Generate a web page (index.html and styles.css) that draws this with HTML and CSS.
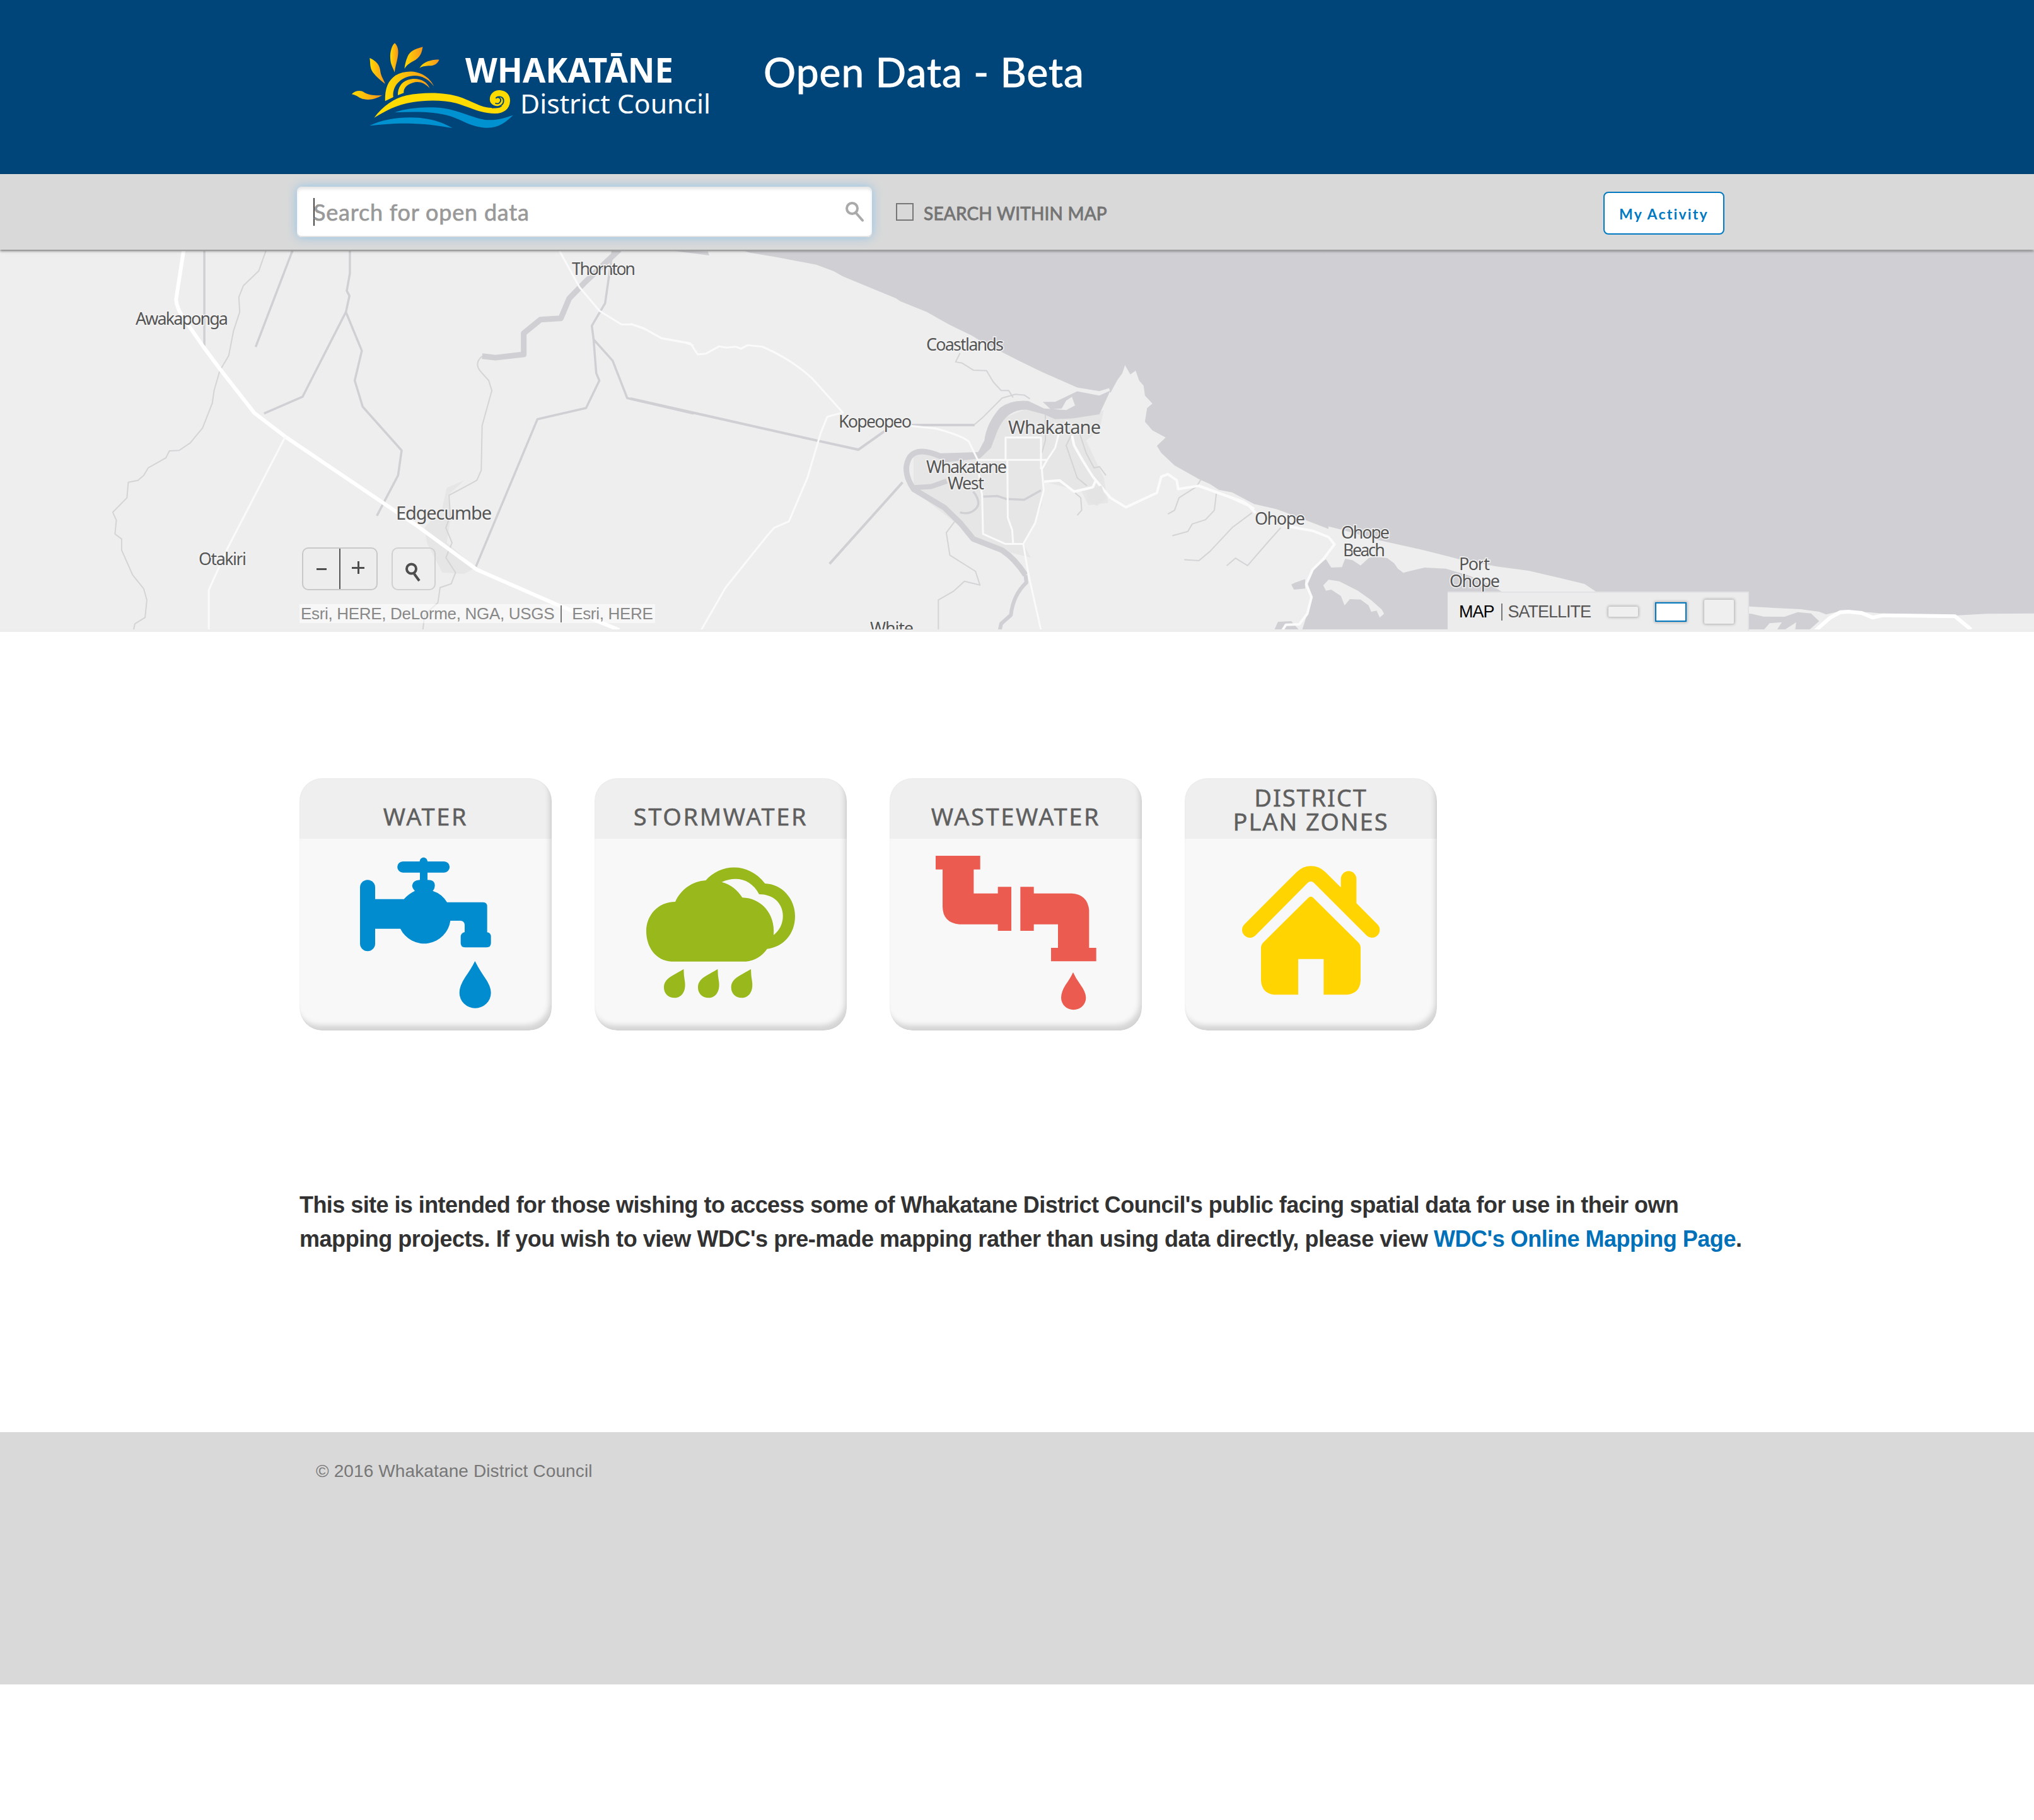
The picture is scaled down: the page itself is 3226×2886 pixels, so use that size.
FILE: index.html
```html
<!DOCTYPE html>
<html lang="en">
<head>
<meta charset="utf-8">
<title>Whakatane District Council Open Data</title>
<link rel="stylesheet" href="styles.css">
</head>
<body>
<header class="header">
  <svg class="logo" viewBox="540 50 620 170" role="img" aria-label="Whakatane District Council">
    <defs>
      <linearGradient id="sun" x1="0" y1="0" x2="1" y2="0">
        <stop offset="0" stop-color="#ffdb00"/>
        <stop offset="1" stop-color="#f7941d"/>
      </linearGradient>
    </defs>
    <g transform="translate(540 50) scale(.39541 .33333)">
      <g fill="url(#sun)">
        <path d="M45 298C60 278 85 277 98 292C120 305 145 304 167 304C140 322 118 327 95 322C75 319 66 302 45 298Z"/>
        <path d="M117 126C145 140 158 160 160 190C163 215 174 230 179 249C160 232 145 216 130 194C116 170 121 150 117 126Z"/>
        <path d="M218 55C230 70 235 90 229 125C225 150 219 170 217 194C212 172 201 160 200 128C198 98 206 65 218 55Z"/>
        <path d="M330 73C326 100 322 118 301 135C282 147 265 158 257 177C258 158 264 130 273 110C287 86 308 82 330 73Z"/>
        <path d="M396 134C388 156 375 163 353 163C338 164 326 167 317 173C325 158 335 149 350 142C367 135 382 132 396 134Z"/>
        <path d="M179 331C178 270 190 235 220 209C270 175 345 185 375 261C350 220 315 204 280 212C235 222 207 265 212 312Z"/>
        <path d="M230 303C230 265 245 240 270 230C305 217 345 230 358 270C335 240 310 235 290 244C265 253 252 272 254 292Z"/>
      </g>
      <path fill="#ffdb00" d="M135 410C170 355 215 317 265 304C340 286 425 290 480 312C530 333 565 363 607 363C625 366 640 365 649 353C625 360 600 350 599 324C598 295 618 277 640 279C670 282 682 308 680 333C678 368 655 390 620 390C560 390 525 362 465 341C410 324 340 326 290 336C225 348 180 378 135 410Z"/>
      <path d="M623 318C630 304 656 308 654 332C653 350 640 358 607 363M623 318C632 307 648 318 641 334C638 343 628 346 621 340" fill="none" stroke="#004579" stroke-width="5"/>
      <path fill="#0092d0" d="M217 385C270 362 350 355 415 365C480 377 530 410 580 420C625 425 660 410 692 398C665 430 635 458 590 458C530 458 490 422 445 404C380 380 300 380 217 385Z"/>
      <path fill="#0092d0" d="M117 448C180 410 280 400 350 416C395 426 425 442 449 459C400 451 360 440 290 438C220 435 170 442 117 448Z"/>
    </g>
    <text class="logo-name" x="738" y="131" textLength="330" lengthAdjust="spacingAndGlyphs">WHAKATĀNE</text>
    <text class="logo-sub" x="825" y="180" textLength="302" lengthAdjust="spacingAndGlyphs">District Council</text>
  </svg>
  <h1 class="title">Open Data - Beta</h1>
</header>

<section class="searchbar">
  <div class="search-field">
    <span class="caret"></span>
    <span class="placeholder">Search for open data</span>
    <svg class="search-icon" viewBox="0 0 30 32"><circle cx="10.500" cy="10.500" r="8.500"/><path d="M16.500 17.500L27 29.500"/></svg>
  </div>
  <span class="checkbox"></span>
  <span class="within">SEARCH WITHIN MAP</span>
  <button class="activity">My Activity</button>
</section>

<section class="map">
  <svg class="map-canvas" viewBox="0 398 3226 600">
    <!-- urban areas -->
    <g class="urban">
      <g transform="translate(0 390) scale(.70153 .39541)">
        <path d="M1050 940L1010 970L1000 1050L960 1130L965 1190L1000 1310L1050 1315L1075 1290L1010 1190L1020 1080L1012 1000Z"/>
      </g>
      <g transform="translate(1000 390) scale(.70153 .39541)">
        <path d="M640 830L790 840L830 700L900 650L980 690L1070 660L1060 740L1030 780L1070 930L1080 1030L1035 1040L1020 985L935 945L930 1040L890 1200L905 1250L860 1230L770 1160L640 980Z"/>
      </g>
    </g>
    <!-- sea, estuary and harbour -->
    <g class="sea">
      <g transform="translate(1000 390) scale(.70153 .39541)">
        <path d="M240 10L270 27L330 45L420 75L460 102L480 122L600 210L610 222L670 265L720 315L770 358L800 390L850 435L880 462L930 505L1010 568L1060 582L1082 570L1085 590L1100 540L1112 510L1118 478L1130 515L1142 500L1150 540L1160 560L1163 600L1180 632L1168 650L1163 705L1180 740L1210 768L1190 802L1200 830L1230 880L1285 935L1310 955L1330 978L1360 988L1410 1035L1460 1055L1520 1095L1578 1135L1578 0L240 0Z"/>
        <path d="M90 18L175 22L178 38L130 27Z"/>
        <path d="M1085 580L1060 600L1010 583L960 625L932 625L950 655L975 652L985 620L998 605L1005 640L985 658L935 652L900 622Q860 615 835 650Q805 710 800 780L785 830L700 845L710 868L790 852L815 810L830 740Q850 655 895 656L935 675L960 695L1000 692L1060 675Z"/>
      </g>
      <g transform="translate(1900 640) scale(.84566 .33333)">
        <path d="M236 -760L236 579L270 600L340 650L420 695L490 740L560 775L620 795L680 830L725 858L745 892L760 960L1035 965L1080 972L1130 978L1165 990L1178 1003L1205 987L1260 993L1300 1003L1420 1008L1480 1000L1568 998L1568 -760Z"/>
        <path d="M240 740L250 780L270 778L276 738L290 745L305 770L320 735L330 728L355 735L368 760L375 785L385 805L400 795L425 780L465 785L510 820L550 865L570 895L600 930L900 985L1038 1000L1060 1013L1100 1014L1125 992L1150 998L1165 1035L1145 1080L195 1080L205 1000L213 910L205 850L215 790Z"/>
        <path d="M201 835L182 852L175 860L180 885L201 880Z"/>
        <path d="M143 1078L150 1038L175 1035L190 1078Z"/>
      </g>
    </g>
    <g class="land" transform="translate(1900 640) scale(.84566 .33333)">
      <path d="M245 838L265 845L300 890L325 935L345 980L349 1000L341 1018L335 985L325 990L320 960L305 932L285 930L275 960L268 915L250 885L240 890L235 865Z"/>
      <path d="M1060 1080L1072 1045L1095 1040L1085 1080ZM1122 1040L1098 1080L1120 1080Z"/>
    </g>
    <!-- drains and streams -->
    <g class="water" transform="translate(0 390) scale(.70153 .39541)">
      <path class="w3" d="M462 15V400M662 15L578 405M791 15V110L784 180L790 200L782 265L684 605L597 672M782 265L818 420L802 540L820 645L908 820L900 920L852 1082"/>
      <path class="w2" d="M602 15L585 100L550 160L540 205L542 265L528 340L517 440L497 500L484 580L480 630L458 730L430 790L405 820L383 822L375 850L335 890L325 920L312 940L290 948L287 1010L255 1068L263 1100L260 1155L275 1175L275 1220L300 1320L325 1375L332 1420L328 1490L305 1515L302 1540"/>
      <path class="w12" d="M1400 15L1320 150L1287 210L1268 290L1222 295L1184 350V435L1120 448L1090 442"/>
      <path class="w2" d="M1090 442Q1072 470 1085 500L1105 540L1112 580L1090 720L1088 900L1078 940L1052 965L1015 1000L1018 1080L1008 1130L1022 1190L1008 1250L1030 1310L1020 1355L995 1370L990 1430L960 1480L956 1540"/>
      <path class="w3" d="M1385 20L1368 230L1338 320L1342 375L1348 510L1355 540L1325 650L1215 695L1075 1290M1342 375L1385 460L1418 610L1568 672"/>
    </g>
    <g class="water" transform="translate(1000 390) scale(.70153 .39541)">
      <path class="w4" d="M0 612L420 780L515 817L575 742M635 718H778M615 948L450 1275"/>
      <path class="w2" d="M778 716L795 690L840 610L870 595L890 598L903 613M745 430L735 465L750 470L775 498L805 500L820 545L838 580L855 580L865 608"/>
      <path class="w12" d="M790 838L700 843Q650 805 632 845Q612 900 640 975L710 1050L745 1110L775 1175L840 1220Q870 1255 893 1320"/>
      <path class="w6" d="M893 1320L895 1350Q865 1400 860 1480L838 1515L835 1540"/>
      <path class="w7" d="M635 970L680 965L715 943"/>
      <path class="w3" d="M775 985Q795 1030 780 1055T745 1068M797 1005L830 1003L850 1015L890 1018L928 980"/>
      <path class="w2" d="M733 1105L714 1150L722 1240L780 1305L790 1360L755 1345L730 1385L696 1420V1540M996 760L985 800L1010 930L1032 962M1015 750L1030 830L1048 890L1060 885L1075 920M1005 990L1018 1010L1020 1060L1010 1080M1290 935L1280 965L1240 1010L1230 1060L1215 1075M1325 985L1320 1060L1300 1098L1270 1115L1260 1145L1225 1162M1405 1070L1360 1130L1310 1225L1285 1262L1252 1258M1470 1130L1440 1190L1395 1282L1368 1252L1348 1282"/>
      <path class="w2" d="M938 675V780L930 830"/>
    </g>
    <!-- roads -->
    <g class="road" transform="translate(0 390) scale(.70153 .39541)">
      <path class="r7" d="M415 20L398 215Q400 260 425 315L460 405L500 500L575 670L645 765L945 1125L1078 1298L1255 1435L1400 1540"/>
      <path class="r3" d="M645 765L515 1210L472 1380V1540M1265 20L1310 165L1355 260L1405 315L1430 315L1460 335L1495 370L1550 388L1568 400"/>
    </g>
    <g class="road" transform="translate(1000 390) scale(.70153 .39541)">
      <path class="r3" d="M0 312L30 330L70 370L135 390L152 435L170 432L200 403L218 408L238 404L250 412L265 398L298 404Q360 450 410 530L480 668L445 685L430 750L400 930L358 1105L325 1130L310 1160L215 1370L160 1540"/>
      <path class="r3" d="M635 722L690 732Q750 760 765 785L785 858L790 950L795 1000L797 1155L848 1195H888L915 1110L934 980L930 895L942 858H785M848 858V768H928V895M852 858L853 1090L863 1140L865 1195M968 755L960 810L942 858M888 1195L900 1320L928 1540"/>
      <path class="r4" d="M998 760L1003 800L1022 860L1045 925L1085 1010L1120 1048L1190 990L1200 925L1215 915L1235 940L1238 975L1285 962L1325 988L1385 1025L1410 1055M935 945L970 940L1003 985L1045 968L1052 940"/>
    </g>
    <g class="road" transform="translate(1900 640) scale(.84566 .33333)">
      <path class="r4" d="M0 390L60 445L95 485L108 520M165 582L215 605L245 635L256 670L235 740L215 790L203 860L213 920L205 1000L190 1050L165 1052L158 1080"/>
      <path class="r7" d="M1158 1080L1185 1020L1205 992L1220 990L1245 996L1265 1018L1285 1007L1420 1012L1450 1075"/>
    </g>
    <path class="park" d="M1723 778L1747 770L1754 790L1740 802L1725 796Z"/>
    <!-- place names -->
    <g class="place">
      <text x="215" y="515" textLength="147">Awakaponga</text>
      <text x="907" y="436" textLength="101">Thornton</text>
      <text class="town" x="628" y="824" textLength="152">Edgecumbe</text>
      <text x="315" y="896" textLength="76">Otakiri</text>
      <text x="1469" y="556" textLength="123">Coastlands</text>
      <text x="1330" y="678" textLength="116">Kopeopeo</text>
      <text class="town" x="1599" y="688" textLength="147">Whakatane</text>
      <text x="1469" y="750" textLength="128">Whakatane</text>
      <text x="1503" y="776" textLength="58">West</text>
      <text x="1990" y="832" textLength="80">Ohope</text>
      <text x="2127" y="854" textLength="77">Ohope</text>
      <text x="2130" y="882" textLength="67">Beach</text>
      <text x="2314" y="904" textLength="49">Port</text>
      <text x="2299" y="931" textLength="80">Ohope</text>
      <text x="1380" y="1006" textLength="69">White</text>
    </g>
  </svg>
  <div class="map-tools">
    <div class="tool-row">
      <div class="zoom"><span class="zoom-out"><i class="minus"></i></span><span class="zoom-in"><i class="plus"></i></span></div>
      <div class="locate"><svg viewBox="0 0 26 32"><circle cx="9.500" cy="10" r="7.500"/><path d="M14 18L22 29"/></svg></div>
    </div>
    <div class="attribution"><span class="sources">Esri, HERE, DeLorme, NGA, USGS</span><i class="bar"></i><span>Esri, HERE</span></div>
  </div>
  <div class="basemap">
    <span class="mode active">MAP</span><i class="bar"></i><span class="mode">SATELLITE</span>
    <span class="size small"></span><span class="size medium"></span><span class="size large"></span>
  </div>
</section>

<main class="content">
  <div class="cards">
    <a class="card">
      <h2 class="card-title">WATER</h2>
      <svg class="card-icon" viewBox="106 360 1200 912" fill="#008ccf">
        <rect x="394" y="556" width="72" height="339" rx="36"/>
        <path d="M460 647H603Q625 622 655 608Q642 595 642 582Q645 558 679 556V521H598A26 26 0 0 1 598 468H678C680 443 713 443 715 468H794A26 26 0 0 1 794 521H715V556C740 556 750 566 750 582Q750 597 740 608Q784 622 808 662H980Q999 662 999 682V805Q1017 808 1017 826V856Q1017 877 996 877H894Q873 877 873 856V826Q874 808 892 804V770Q890 750 872 750H824A126 126 0 0 1 586 788H460Z"/>
        <path d="M941 942Q957 975 985 1016Q1017 1060 1017 1093A75 73 0 0 1 867 1093Q867 1060 895 1018Q925 975 941 942Z"/>
      </svg>
    </a>
    <a class="card">
      <h2 class="card-title">STORMWATER</h2>
      <svg class="card-icon" viewBox="99 360 1200 912" fill="#98b81c">
        <path fill-rule="evenodd" d="M483 660C510 600 565 562 628 558C700 478 830 470 910 573C990 575 1053 645 1053 728C1053 815 995 875 920 884C895 920 860 940 820 944H465C390 940 345 875 345 800C345 725 400 660 483 660ZM704 566Q765 582 802 640C890 642 960 715 951 818C1025 765 1010 625 882 624C845 553 775 535 704 566Z"/>
        <path id="rain" d="M523 980Q523 1010 529 1042C534 1085 515 1117 480 1117C448 1117 429 1095 429 1068C429 1022 475 1010 523 980Z"/>
        <use href="#rain" x="162"/>
        <use href="#rain" x="320"/>
      </svg>
    </a>
    <a class="card">
      <h2 class="card-title">WASTEWATER</h2>
      <svg class="card-icon" viewBox="93 360 1200 912" fill="#eb5b50">
        <path d="M312 441H524V506H493V620H608V589H672V798H608V767H425Q345 760 345 682V506H312Z"/>
        <path d="M715 589H779V620H960Q1035 625 1042 700V879H1076V943H861V879H894V767H779V798H715Z"/>
        <path d="M966 995Q978 1023 1000 1053Q1027 1090 1027 1116A59 58 0 0 1 909 1116Q909 1088 930 1055Q953 1023 966 995Z"/>
      </svg>
    </a>
    <a class="card">
      <h2 class="card-title two-line">DISTRICT<br>PLAN ZONES</h2>
      <svg class="card-icon" viewBox="87 360 1200 912" fill="#ffd400">
        <path d="M371 767L620 518Q650 490 688 490T756 518L830 592V551A37 37 0 0 1 904 551V667L1004 767A37 37 0 0 1 952 820L702 570Q687 556 672 570L424 820A37 37 0 0 1 371 767Z"/>
        <path d="M675 641Q687 630 699 641L914 854Q924 864 924 876V1035Q920 1095 860 1102H748V932H627V1102H512Q454 1095 450 1035V876Q450 864 460 854Z"/>
      </svg>
    </a>
  </div>
  <p class="intro"><span class="line1">This site is intended for those wishing to access some of Whakatane District Council's public facing spatial data for use in their own</span><br><span class="line2">mapping projects. If you wish to view WDC's pre-made mapping rather than using data directly, please view <a class="link">WDC's Online Mapping Page</a>.</span></p>
</main>

<footer class="footer">© 2016 Whakatane District Council</footer>
</body>
</html>
```
FILE: styles.css
```css
* { box-sizing: border-box; }
body { margin: 0; background: #fff; font-family: "Liberation Sans", Arial, sans-serif; }
h1, h2, p { margin: 0; }

.header { display: flex; align-items: flex-start; height: 276px; padding: 50px 0 0 540px; background: #004579; }
.logo { width: 620px; height: 170px; flex: none; }
.logo-name { font: 700 54px "Noto Sans", sans-serif; fill: #fff; }
.logo-sub { font: 400 42px "Noto Sans", sans-serif; fill: #fff; }
.title { margin: 24px 0 0 51px; color: #fff; font: 400 64px/80px Lato, sans-serif; letter-spacing: 1.05px; white-space: nowrap; -webkit-text-stroke: 1px #fff; }

.searchbar { position: relative; z-index: 2; display: flex; align-items: center; height: 120px; padding: 0 491px 0 471px; background: #d9d9d9; box-shadow: 0 2px 4px rgba(0, 0, 0, .5); }
.search-field { display: flex; align-items: center; width: 912px; height: 80px; padding: 0 12px 0 26px; border-radius: 7px; background: #fff; box-shadow: 0 0 16px rgba(110, 185, 240, .7), inset 0 4px 4px rgba(0, 0, 0, .1), inset 0 -2px 0 #e2e2e2; }
.caret { width: 2px; height: 44px; margin-right: -2px; background: #444; }
.placeholder { color: #999; font: 400 36px/50px Lato, sans-serif; letter-spacing: .8px; -webkit-text-stroke: .7px #999; }
.search-icon { width: 30px; height: 32px; margin-left: auto; fill: none; stroke: #aaa; stroke-width: 4; stroke-linecap: round; }
.checkbox { width: 28px; height: 28px; margin-left: 38px; border: 2px solid #777; }
.within { margin: 3px 0 0 16px; color: #747474; font: 400 28px/40px Lato, sans-serif; letter-spacing: .2px; white-space: nowrap; -webkit-text-stroke: .9px #747474; }
.activity { width: 192px; height: 68px; margin: 4px 0 0 auto; padding: 2px 0 0; border: 2px solid #0079c1; border-radius: 8px; background: #fff; color: #0079c1; font: 700 23px/60px Lato, sans-serif; letter-spacing: 2.2px; }

.map { position: relative; height: 606px; padding-top: 2px; background: #ededed; }
.map-canvas { display: block; width: 3226px; height: 600px; background: #eee; }
.map path { vector-effect: non-scaling-stroke; }
.urban { fill: #e6e6e6; }
.sea { fill: #d0cfd4; }
.land { fill: #eee; }
.park { fill: #e4e4e5; }
.water { fill: none; stroke: #d0cfd4; stroke-linejoin: round; }
.road { fill: none; stroke: #fff; stroke-linejoin: round; }
.w2 { stroke: #d4d4d7; stroke-width: 2; }
.w3 { stroke-width: 3.500; }
.w4 { stroke-width: 4; }
.w6 { stroke-width: 6; }
.w7 { stroke-width: 8; }
.w12 { stroke-width: 9; }
.r3 { stroke: #fafafa; stroke-width: 3; }
.r4 { stroke: #fbfbfb; stroke-width: 4; }
.r7 { stroke-width: 6; }
.place { fill: #555; font: 400 27px "Noto Sans", sans-serif; stroke: #f3f3f3; stroke-width: 3; paint-order: stroke; }
.place .town { font-size: 29px; }

.map-tools { position: absolute; left: 475px; top: 472px; }
.tool-row { display: flex; gap: 22px; margin-left: 4px; }
.zoom { display: flex; width: 120px; height: 68px; border: 2px solid #c8c8c8; border-radius: 10px; background: #ededed; }
.zoom span { display: flex; flex: 1; align-items: center; justify-content: center; }
.zoom-in { margin-left: -1px; border-left: 2px solid #555; }
.minus { width: 16px; height: 3px; background: #4d4d4d; }
.plus { width: 20px; height: 20px; margin-top: -4px; background: linear-gradient(#4d4d4d, #4d4d4d) center / 20px 3px no-repeat, linear-gradient(#4d4d4d, #4d4d4d) center / 3px 20px no-repeat; }
.locate { display: flex; align-items: center; justify-content: center; width: 70px; height: 68px; border: 2px solid #d0d0d0; border-radius: 10px; }
.locate svg { width: 26px; height: 32px; margin: 12px 0 0 0; fill: none; stroke: #4d4d4d; stroke-width: 4; }
.attribution { display: flex; align-items: center; width: 564px; height: 30px; margin-top: 22px; padding-left: 2px; background: rgba(255, 255, 255, .5); color: #888; font-size: 26px; line-height: 30px; letter-spacing: -.32px; white-space: nowrap; }
.bar { flex: none; width: 2px; height: 27px; background: #777; }
.attribution .bar { margin: 0 16px 0 10px; }

.basemap { position: absolute; left: 2296px; top: 542px; display: flex; align-items: center; width: 478px; height: 62px; padding: 0 0 0 18px; border-top: 2px solid #e2e2e4; border-right: 2px solid #e2e2e4; background: #ececec; font-size: 27px; letter-spacing: -1px; }
.mode { color: #555; }
.mode.active { color: #000; }
.basemap .bar { margin: 0 9px 0 11px; }
.size { flex: none; background: #efefef; box-shadow: 0 0 4px 1px rgba(0, 0, 0, .28); }
.small { width: 47px; height: 16px; margin-left: 28px; border-radius: 2px; }
.medium { width: 50px; height: 31px; margin-left: 27px; border: 2px solid #0079c1; background: #fff; }
.large { width: 47px; height: 38px; margin-left: 28px; border-radius: 2px; }

.content { height: 1269px; padding: 232px 0 0 475px; }
.cards { display: flex; gap: 68px; }
.card { position: relative; width: 400px; height: 400px; overflow: hidden; border-radius: 36px; background: #f8f8f8; }
.card::after { content: ""; position: absolute; inset: 0; border-radius: 36px; box-shadow: inset -5px -10px 9px -2px rgba(0, 0, 0, .15), inset 0 0 3px rgba(0, 0, 0, .04); }
.card-title { display: flex; align-items: center; justify-content: center; height: 96px; padding-top: 24px; background: #efefef; color: #5f5f5f; font: 400 38px/38px "Noto Sans", sans-serif; letter-spacing: 2.600px; text-align: center; -webkit-text-stroke: .5px #5f5f5f; }
.two-line { padding-top: 2px; letter-spacing: 1.900px; }
.card-icon { display: block; width: 400px; height: 304px; }
.intro { margin-top: 250px; color: #323232; font-size: 36px; font-weight: 700; line-height: 54px; white-space: nowrap; }
.line1 { letter-spacing: -.565px; }
.line2 { letter-spacing: -.465px; }
.link { color: #0071b8; }
.footer { height: 400px; padding: 44px 0 0 501px; background: #d9d9d9; color: #777; font-size: 28px; line-height: 36px; letter-spacing: .12px; }
```
